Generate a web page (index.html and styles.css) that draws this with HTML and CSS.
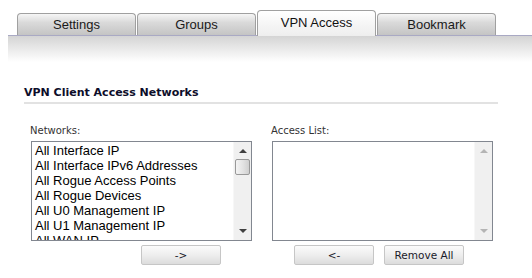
FILE: index.html
```html
<!DOCTYPE html>
<html lang="en">

<head>
    <title>VPN Access</title>
    <link rel="stylesheet" href="styles.css">
</head>

<body>
    <div class="tab-bar">
        <div class="tab">Settings</div>
        <div class="tab">Groups</div>
        <div class="tab active">VPN Access</div>
        <div class="tab">Bookmark</div>
    </div>
    <div class="tab-shade"></div>

    <div class="section">
        <h3>VPN Client Access Networks</h3>

        <div class="lists">
            <div class="list-col">
                <div class="list-label">Networks:</div>
                <div class="listbox">
                    <div class="items">
                        <div>All Interface IP</div>
                        <div>All Interface IPv6 Addresses</div>
                        <div>All Rogue Access Points</div>
                        <div>All Rogue Devices</div>
                        <div>All U0 Management IP</div>
                        <div>All U1 Management IP</div>
                        <div>All WAN IP</div>
                    </div>
                    <div class="scrollbar">
                        <span class="arrow up"></span>
                        <span class="thumb"></span>
                        <span class="arrow down"></span>
                    </div>
                </div>
                <div class="btn-row right">
                    <button class="btn">-&gt;</button>
                </div>
            </div>

            <div class="list-col">
                <div class="list-label">Access List:</div>
                <div class="listbox">
                    <div class="items"></div>
                    <div class="scrollbar disabled">
                        <span class="arrow up"></span>
                        <span class="arrow down"></span>
                    </div>
                </div>
                <div class="btn-row">
                    <button class="btn">&lt;-</button>
                    <button class="btn">Remove All</button>
                </div>
            </div>
        </div>
    </div>
</body>

</html>
```

FILE: styles.css
```css
body {
    margin: 0;
    background-color: #ffffff;
    font-family: "Liberation Sans", Arial, sans-serif;
    color: #222222;
}

.tab-bar {
    display: flex;
    align-items: flex-end;
    gap: 1px;
    margin-left: 8px;
    padding: 10px 0 0 9px;
    border-bottom: 1px solid #a9a9c4;
}

.tab {
    box-sizing: border-box;
    width: 119px;
    height: 22px;
    border: 1px solid #a0a0a0;
    border-bottom: none;
    border-radius: 4px 4px 0 0;
    background: linear-gradient(#f6f6f6, #dadada 40%, #c4c4c4);
    font-size: 13px;
    line-height: 21px;
    text-align: center;
    color: #1a1a1a;
}

.tab.active {
    height: 26px;
    margin-bottom: -1px;
    line-height: 23px;
    background: linear-gradient(#ffffff, #f4f4f4 60%, #eeeeee);
    color: #111111;
}

.tab-shade {
    height: 26px;
    margin-left: 8px;
    background: linear-gradient(#d4d4d4, #ffffff);
}

.section {
    padding: 24px 0 0 24px;
}

h3 {
    width: 474px;
    margin: 0;
    padding-bottom: 3px;
    border-bottom: 2px solid #e2e2e2;
    font-family: "DejaVu Sans", Verdana, sans-serif;
    font-size: 11px;
    font-weight: bold;
    color: #0d0d2a;
}

.lists {
    display: flex;
    gap: 20px;
    margin-top: 21px;
    padding-left: 7px;
}

.list-col {
    width: 221px;
}

.list-label {
    margin: 0 0 5px -1px;
    font-family: "DejaVu Sans", Tahoma, sans-serif;
    font-size: 10px;
    color: #333333;
}

.listbox {
    box-sizing: border-box;
    display: flex;
    height: 100px;
    border: 1px solid #828790;
    background-color: #ffffff;
    overflow: hidden;
}

.items {
    flex: 1;
    padding: 1px 0 0 3px;
    font-size: 13px;
    line-height: 15px;
    color: #000000;
    white-space: nowrap;
    overflow: hidden;
}

.scrollbar {
    position: relative;
    width: 17px;
    background-color: #f0f0f0;
    border-left: 1px solid #f7f7f7;
}

.arrow {
    position: absolute;
    left: 5px;
    width: 0;
    height: 0;
    border-left: 4px solid transparent;
    border-right: 4px solid transparent;
}

.arrow.up {
    top: 7px;
    border-bottom: 4px solid #404040;
}

.arrow.down {
    bottom: 7px;
    border-top: 4px solid #404040;
}

.disabled .arrow.up {
    border-bottom-color: #b4b4b4;
}

.disabled .arrow.down {
    border-top-color: #b4b4b4;
}

.thumb {
    position: absolute;
    top: 17px;
    left: 1px;
    box-sizing: border-box;
    width: 15px;
    height: 16px;
    border: 1px solid #999999;
    border-radius: 2px;
    background: linear-gradient(90deg, #f4f4f4, #e2e2e2 55%, #cfcfcf);
}

.btn-row {
    display: flex;
    gap: 10px;
    margin-top: 4px;
    padding-left: 22px;
}

.btn-row.right {
    padding-left: 110px;
}

.btn {
    box-sizing: border-box;
    width: 80px;
    height: 20px;
    padding: 0;
    border: 1px solid #c6c6c6;
    border-radius: 2px;
    background: linear-gradient(#fbfbfb, #eeeeee 50%, #dcdcdc);
    font-family: "DejaVu Sans", Tahoma, sans-serif;
    font-size: 10.5px;
    color: #1a1a2a;
}
```
